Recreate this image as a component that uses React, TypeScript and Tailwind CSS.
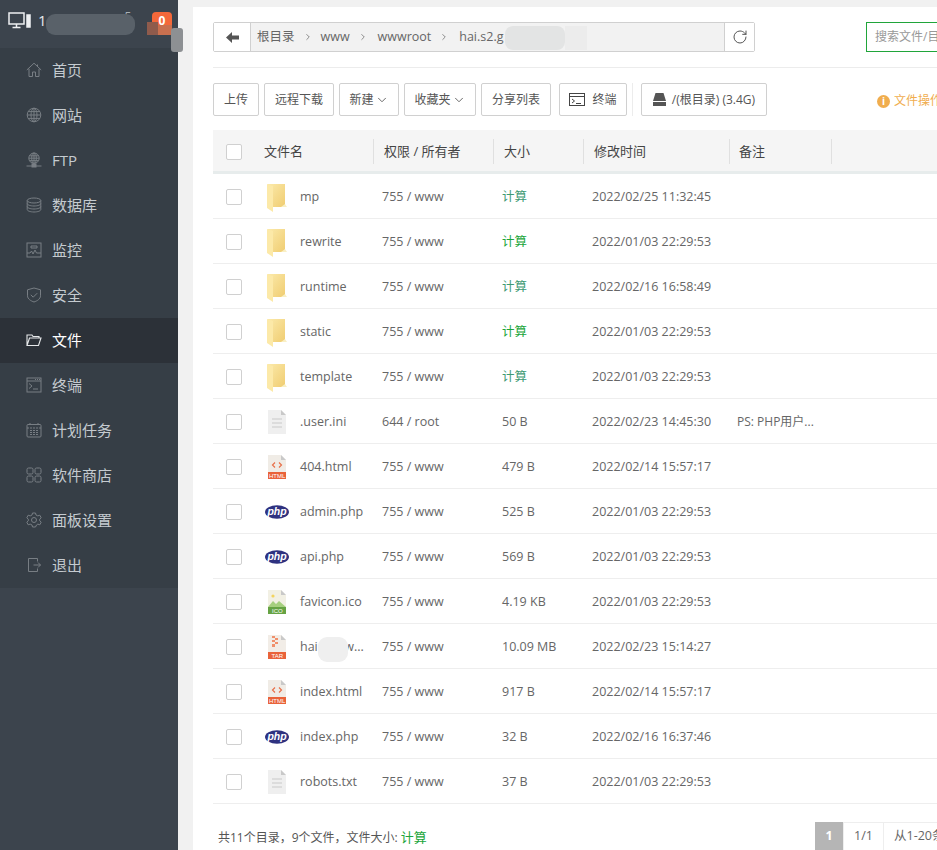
import React from "react";
import { ChevronRight, ChevronDown, RotateCw } from "lucide-react";

const font = "font-['Open_Sans','Noto_Sans_CJK_SC',sans-serif]";

const S = ({ children }: { children: React.ReactNode }) => (
  <svg width="16" height="16" viewBox="0 0 16 16" fill="none" stroke="#787e84" strokeWidth="1" className="shrink-0">
    {children}
  </svg>
);

const navIcons: Record<string, React.ReactNode> = {
  home: <S><path d="M.8 8 8 1.2 15.2 8M3 6.8v7.7h3.5v-4.5h3v4.5H13V6.8M11.5 2.5v2" /></S>,
  globe: <S><circle cx="8" cy="8" r="6.8" /><ellipse cx="8" cy="8" rx="3" ry="6.8" /><path d="M8 1.2v13.6M1.2 8h13.6M2.2 4.6h11.6M2.2 11.4h11.6" /></S>,
  ftp: <S><circle cx="8" cy="6.2" r="5.2" /><ellipse cx="8" cy="6.2" rx="2.3" ry="5.2" /><path d="M8 1v10.4M2.8 6.2h10.4M3.5 3.8h9M3.5 8.6h9M.5 14h15" /><rect x="6" y="12" width="4" height="3" fill="#787e84" /></S>,
  db: <S><ellipse cx="8" cy="3.5" rx="6.8" ry="2.5" /><path d="M1.2 3.5v9c0 1.4 3 2.5 6.8 2.5s6.8-1.1 6.8-2.5v-9M1.2 6.5c0 1.4 3 2.5 6.8 2.5s6.8-1.1 6.8-2.5M1.2 9.5c0 1.4 3 2.5 6.8 2.5s6.8-1.1 6.8-2.5" /></S>,
  monitor: <S><rect x="1" y="1" width="14" height="14" /><path d="M1 11h3l1.5-2 1.5 3 2-4 1.5 3H15M5 4h6v2H5z" /></S>,
  shield: <S><path d="M8 1 14.5 2.8v6C14.500 12 11 14 8 15 5 14 1.500 12 1.500 8.800v-6z" /><path d="m4.800 7.800 2.400 2.400 4-4" /></S>,
  folder: <svg width="16" height="16" viewBox="0 0 16 16" fill="none" stroke="#e6e8ea" strokeWidth="1.1" className="shrink-0"><path d="M1 13.500V3h5l1 1.500h6V6M1 13.500h11.500L15 6H3.500z" /></svg>,
  terminal: <S><rect x="1" y="1" width="14" height="14" /><path d="M1 4h14M3 6.500l3 2.500-3 2.500M7 12h5" /><path d="M9 2.500h1M11 2.500h1M13 2.500h1" /></S>,
  calendar: <S><rect x="1" y="2.500" width="14" height="12.500" rx="1" /><path d="M1 6h14M4 1v3M12 1v3M4 8.500h8M4 10.500h8M4 12.500h8" strokeDasharray="2 1" /></S>,
  store: <S><rect x="1" y="1" width="6" height="6" rx="1.500" /><rect x="9" y="1" width="6" height="6" rx="1.500" /><rect x="1" y="9" width="6" height="6" rx="1.500" /><rect x="9" y="9" width="6" height="6" rx="1.500" /></S>,
  gear: <S><path d="M6.500 1h3l.5 2 1.800.9 2-.7 1.400 2.600-1.500 1.400v1.600l1.500 1.400-1.400 2.600-2-.7L10.500 13l-1 2h-3l-.5-2-1.800-.9-2 .7-1.400-2.600 1.500-1.400V7.200L.8 5.800l1.400-2.600 2 .7L6 3z" /><circle cx="8" cy="8" r="2.500" /></S>,
  exit: <S><path d="M11.500 4.500V1.500h-9v13h9v-3M7.500 8h7M12 5.500 14.500 8 12 10.500" /></S>,
};

const nav: [string, string, boolean?][] = [
  ["首页", "home"],
  ["网站", "globe"],
  ["FTP", "ftp"],
  ["数据库", "db"],
  ["监控", "monitor"],
  ["安全", "shield"],
  ["文件", "folder", true],
  ["终端", "terminal"],
  ["计划任务", "calendar"],
  ["软件商店", "store"],
  ["面板设置", "gear"],
  ["退出", "exit"],
];

const Folder = () => (
  <svg width="20" height="29" viewBox="0 0 20 29">
    <defs>
      <linearGradient id="fg" x1="0" x2="1" y1="0" y2="1">
        <stop offset="0" stopColor="#fbe9a9" />
        <stop offset="1" stopColor="#f0cd72" />
      </linearGradient>
    </defs>
    <rect x="1" y="1" width="17" height="23" fill="url(#fg)" />
    <path d="M18 21l2 3h-6z" fill="#f9efc4" />
    <path d="M0 1l6 2v26l-6-4z" fill="#fce9a8" />
  </svg>
);

const Doc = ({ color = "#efefef", children }: { color?: string; children?: React.ReactNode }) => (
  <svg width="18" height="24" viewBox="0 0 18 24">
    <path d="M0 0h13l5 5v19H0z" fill={color} />
    <path d="M13 0l5 5h-5z" fill="#c9c9c9" />
    {children}
  </svg>
);

const Txt = () => (
  <Doc>
    <path d="M4 9h10M4 13h10M4 17h10" stroke="#d6d6d6" strokeWidth="1.300" />
  </Doc>
);

const Html = () => (
  <Doc color="#f0ece6">
    <path d="M7 7.500 4.500 10 7 12.500M11 7.500 13.500 10 11 12.500" stroke="#e8704a" strokeWidth="1.200" fill="none" />
    <rect y="17" width="18" height="7" fill="#e9633a" />
    <text x="1" y="22.800" fontSize="6" fill="#fff" fontFamily="Liberation Sans">HTML</text>
  </Doc>
);

const Php = () => (
  <svg width="24" height="14" viewBox="0 0 24 14">
    <ellipse cx="12" cy="7" rx="12" ry="6.800" fill="#2f3280" />
    <text x="12" y="10" fontSize="10.500" fontWeight="700" fontStyle="italic" fill="#fff" textAnchor="middle" fontFamily="Liberation Sans">php</text>
  </svg>
);

const Ico = () => (
  <Doc color="#f2f0e4">
    <circle cx="5" cy="6" r="1.600" fill="#f3d45f" />
    <path d="M0 17l5-6 3 3 3-3 7 6z" fill="#a6cf7f" />
    <rect y="17" width="18" height="7" fill="#66a344" />
    <text x="4" y="22.800" fontSize="6" fill="#fff" fontFamily="Liberation Sans">ICO</text>
  </Doc>
);

const Tar = () => (
  <Doc color="#f2ede7">
    <path d="M4 1h3v2H4zM7 3h3v2H7zM4 5h3v2H4zM7 7h3v2H7zM4 9h3v3H4z" fill="#f0906c" />
    <rect y="17" width="18" height="7" fill="#e9633a" />
    <text x="3.500" y="22.800" fontSize="6" fill="#fff" fontFamily="Liberation Sans">TAR</text>
  </Doc>
);

const rows: [React.ReactNode, string, string, string, string, string?, string?][] = [
  [<Folder />, "mp", "755 / www", "计算", "2022/02/25 11:32:45", "", "#3d9a74"],
  [<Folder />, "rewrite", "755 / www", "计算", "2022/01/03 22:29:53", "", "#20a53a"],
  [<Folder />, "runtime", "755 / www", "计算", "2022/02/16 16:58:49", "", "#3d9a74"],
  [<Folder />, "static", "755 / www", "计算", "2022/01/03 22:29:53", "", "#20a53a"],
  [<Folder />, "template", "755 / www", "计算", "2022/01/03 22:29:53", "", "#3d9a74"],
  [<Txt />, ".user.ini", "644 / root", "50 B", "2022/02/23 14:45:30", "PS: PHP用户..."],
  [<Html />, "404.html", "755 / www", "479 B", "2022/02/14 15:57:17"],
  [<Php />, "admin.php", "755 / www", "525 B", "2022/01/03 22:29:53"],
  [<Php />, "api.php", "755 / www", "569 B", "2022/01/03 22:29:53"],
  [<Ico />, "favicon.ico", "755 / www", "4.19 KB", "2022/01/03 22:29:53"],
  [<Tar />, "hai.s2.gw...", "755 / www", "10.09 MB", "2022/02/23 15:14:27"],
  [<Html />, "index.html", "755 / www", "917 B", "2022/02/14 15:57:17"],
  [<Php />, "index.php", "755 / www", "32 B", "2022/02/16 16:37:46"],
  [<Txt />, "robots.txt", "755 / www", "37 B", "2022/01/03 22:29:53"],
];

const Btn = ({ children, w }: { children: React.ReactNode; w: string }) => (
  <div className={`${w} h-[33px] shrink-0 flex items-center justify-center gap-[1px] border border-[#d0d0d0] rounded-[2px] bg-white text-[12px] text-[#555]`}>
    {children}
  </div>
);

const Check = () => <div className="w-4 h-4 border border-[#d0d0d0] rounded-[2px] bg-white shrink-0" />;

const Crumb = ({ t, wide }: { t: string; wide?: boolean }) => (
  <>
    <span>{t}</span>
    <ChevronRight size={10} strokeWidth={2} className={`text-[#777] ${wide ? "ml-[8px] mr-[10px]" : "mx-[8px]"}`} />
  </>
);

export default function App() {
  return (
    <div className={`${font} w-[937px] h-[850px] overflow-hidden flex bg-[#f1f1f1]`}>
      <aside className="relative w-[178px] h-full shrink-0 bg-[#3c444d] flex flex-col">
        <div className="h-[48px] flex items-center pl-[8px] pb-[8px] text-white text-[15px]">
          <svg width="23" height="17" viewBox="0 0 23 17" fill="none" stroke="#eef0f2" strokeWidth="1.500">
            <rect x="1" y="1" width="15" height="11" />
            <path d="M8.500 12v3M4.500 15.500h8" />
            <rect x="19" y="3" width="3" height="12" fill="#eef0f2" />
          </svg>
          <span className="ml-[7px] text-[#e6eaee]">1</span>
          <span className="ml-[78px] -translate-y-[3px] text-[#aab0b5] text-[12px]">5</span>
        </div>
        <div className="absolute left-[46px] top-[14px] w-[89px] h-[21px] rounded-[9px] bg-[#596169]" />
        <div className="absolute left-[152px] top-[12px] w-[20px] h-[21px] rounded-[4px] bg-[#f4683a]" />
        <div className="absolute left-[147px] top-[22px] w-[11px] h-[13px] bg-[#8f5b4c]" />
        <div className="absolute left-[158px] top-[25px] w-[14px] h-[10px] bg-[#c9704f]" />
        <div className="absolute left-[152px] top-[12px] w-[20px] h-[18px] text-white text-[12px] font-bold flex items-center justify-center">0</div>
        <div className="absolute left-[171px] top-[28px] w-[12px] h-[24px] rounded-[3px] bg-[#8d9093]" />
        <nav className="bg-[#363e46]">
          {nav.map(([label, icon, active]) => (
            <div key={label} className={`h-[45px] flex items-center pl-[26px] pb-[1px] gap-[10px] text-[15px] ${active ? "bg-[#2c3138] text-white" : "text-[#c5cbd0]"}`}>
              {navIcons[icon]}
              <span>{label}</span>
            </div>
          ))}
        </nav>
      </aside>

      <main className="relative ml-[15px] mt-[7px] w-[1000px] shrink-0 bg-white pl-[20px]">
        <div className="flex items-start pt-[15px] h-[61px] border-b border-[#ececec]">
          <div className="w-[542px] h-[30px] shrink-0 flex border border-[#d0d0d0] rounded-[2px] bg-[#f2f2f2] text-[12.5px] text-[#666]">
            <div className="w-[37px] bg-white border-r border-[#d0d0d0] flex items-center justify-center">
              <svg width="13" height="11" viewBox="0 0 13 11"><path d="M0 5.500 6 0v3.500h7v4H6V11z" fill="#555" /></svg>
            </div>
            <div className="flex-1 flex items-center pl-[6px]">
              <Crumb t="根目录" />
              <Crumb t="www" wide />
              <Crumb t="wwwroot" wide />
              <span>hai.s2.g</span>
            </div>
            <div className="w-[30px] bg-white border-l border-[#d0d0d0] flex items-center justify-center">
              <RotateCw size={16} strokeWidth={1.500} className="text-[#555]" />
            </div>
          </div>
          <div className="ml-[111px] w-[120px] h-[30px] border border-[#20a53a] pl-[8px] flex items-center text-[12px] text-[#999] bg-white shrink-0">搜索文件/目录</div>
        </div>
        <div className="absolute left-[312px] top-[19px] w-[60px] h-[24px] rounded-[8px] bg-[#e3e4e4]" />
        <div className="absolute left-[372px] top-[19px] w-[22px] h-[24px] bg-[#ececec]" />

        <div className="flex items-center h-[33px] mt-[15px] text-[12px]">
          <Btn w="w-[46px]">上传</Btn>
          <Btn w="w-[70px] ml-[5px]">远程下载</Btn>
          <Btn w="w-[60px] ml-[5px]">新建<ChevronDown size={14} strokeWidth={1.500} /></Btn>
          <Btn w="w-[72px] ml-[5px]">收藏夹<ChevronDown size={14} strokeWidth={1.500} /></Btn>
          <Btn w="w-[70px] ml-[5px]">分享列表</Btn>
          <Btn w="w-[68px] ml-[8px]">
            <svg width="16" height="13" viewBox="0 0 16 13" fill="none" stroke="#444" className="mr-[6px]">
              <rect x=".5" y=".5" width="15" height="12" />
              <path d="M.5 3.500h15M3 6l2.500 2L3 10M7 10.500h5" />
            </svg>
            终端
          </Btn>
          <div className="w-px h-[33px] bg-[#ececec] ml-[5px]" />
          <Btn w="w-[126px] ml-[8px]">
            <svg width="13" height="13" viewBox="0 0 13 13" className="mr-[5px]">
              <path d="M2.500 0h8L13 8H0z" fill="#555" />
              <rect y="9" width="13" height="4" fill="#555" />
            </svg>
            /(根目录) (3.4G)
          </Btn>
          <div className="ml-[110px] pt-[3px] flex items-center gap-[4px] text-[#f0ad4e] text-[12px] shrink-0">
            <span className="w-[13px] h-[13px] rounded-full bg-[#f0ad4e] text-white text-[10px] font-bold flex items-center justify-center">i</span>
            文件操作记录
          </div>
        </div>

        <div className="mt-[14px] h-[44px] pt-[2px] flex items-center bg-[#f5f5f5] border-b-[3px] border-[#e7ecec] text-[13px] text-[#444]">
          <div className="w-[51px] pl-[13px] shrink-0"><Check /></div>
          <div className="w-[110px] h-[25px] flex items-center border-r border-[#e0e0e0] shrink-0">文件名</div>
          <div className="w-[120px] h-[25px] pl-[10px] flex items-center border-r border-[#e0e0e0] shrink-0">权限 / 所有者</div>
          <div className="w-[90px] h-[25px] pl-[10px] flex items-center border-r border-[#e0e0e0] shrink-0">大小</div>
          <div className="w-[146px] h-[25px] pl-[10px] flex items-center border-r border-[#e0e0e0] shrink-0">修改时间</div>
          <div className="w-[102px] h-[25px] pl-[9px] flex items-center border-r border-[#e0e0e0] shrink-0">备注</div>
        </div>

        {rows.map(([icon, name, perm, size, time, note, color], i) => (
          <div key={i} className="h-[45px] pt-[2px] flex items-center border-b border-[#eeeeee] text-[12.5px] text-[#666]">
            <div className="w-[51px] pl-[13px] shrink-0"><Check /></div>
            <div className="w-[26px] mr-[10px] flex justify-center shrink-0">{icon}</div>
            <div className="w-[82px] shrink-0">{name}</div>
            <div className="w-[120px] shrink-0">{perm}</div>
            <div className="w-[90px] shrink-0" style={color ? { color } : undefined}>{size}</div>
            <div className="w-[145px] shrink-0">{time}</div>
            <div className="shrink-0 text-[12px]">{note}</div>
          </div>
        ))}
        <div className="absolute left-[125px] top-[630px] w-[30px] h-[25px] rounded-[9px] bg-[#efefef]" />

        <div className="flex items-start h-[46px] pt-[18px]">
          <div className="w-[602px] pl-[5px] pt-[6px] text-[12px] text-[#555] shrink-0">
            共11个目录，9个文件，文件大小: <span className="text-[13px] text-[#20a53a]">计算</span>
          </div>
          <div className="flex h-[28px] text-[12.5px] text-[#666]">
            <div className="w-[28px] bg-[#b5b5b5] text-white font-bold flex items-center justify-center">1</div>
            <div className="w-[41px] border border-[#eeeeee] border-b-0 flex items-center justify-center">1/1</div>
            <div className="border border-[#eeeeee] border-l-0 border-b-0 px-[10px] flex items-center whitespace-nowrap">从1-20条</div>
          </div>
        </div>
      </main>
    </div>
  );
}
